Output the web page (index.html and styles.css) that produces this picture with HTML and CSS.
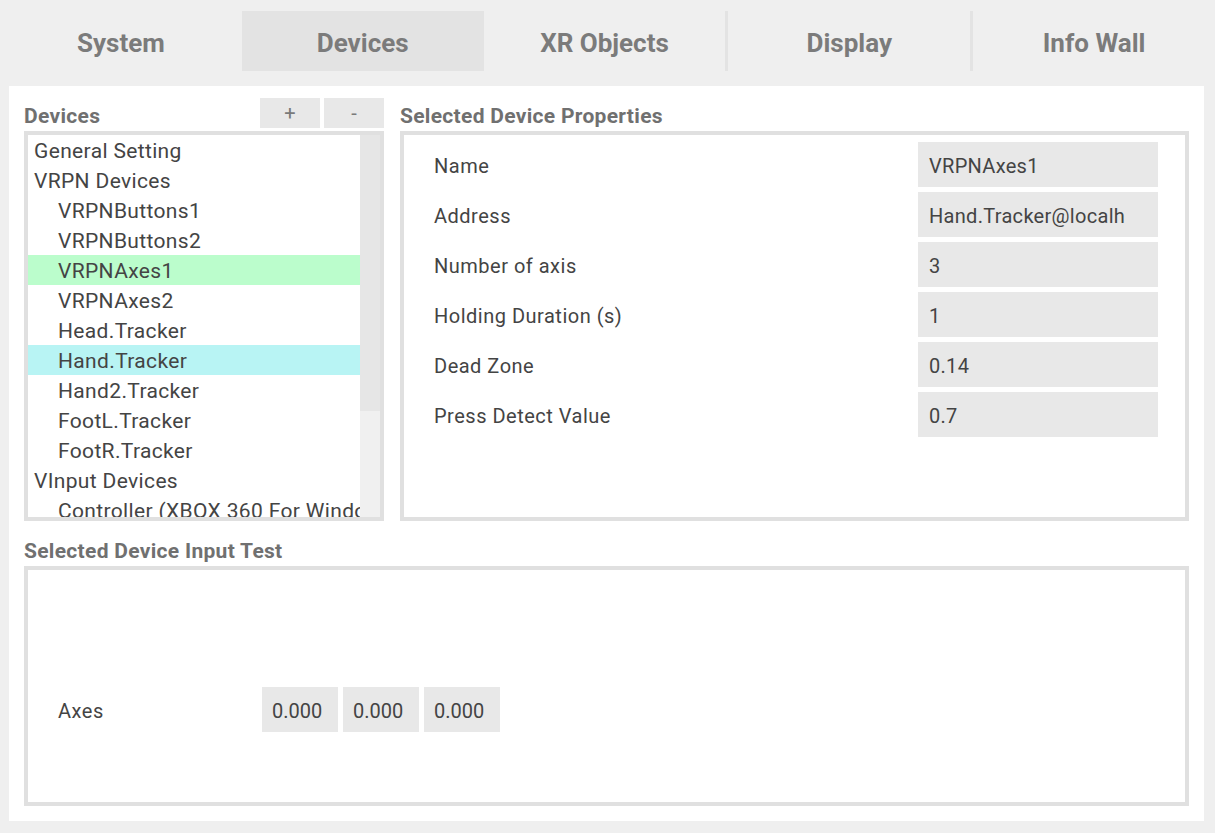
FILE: index.html
```html
<!DOCTYPE html>
<html>
<head>
<meta charset="utf-8">
<link rel="stylesheet" href="styles.css">
</head>
<body>
<nav class="tabs">
  <div class="tab">System</div>
  <div class="tab active">Devices</div>
  <div class="tab sep-right">XR Objects</div>
  <div class="tab sep-right">Display</div>
  <div class="tab">Info Wall</div>
</nav>
<main class="panel">
  <section class="top">
    <div class="col-left">
      <div class="head-row">
        <h2 class="heading">Devices</h2>
        <div class="btns">
          <button class="btn">+</button>
          <button class="btn">-</button>
        </div>
      </div>
      <div class="listbox">
        <ul class="list">
          <li class="item">General Setting</li>
          <li class="item">VRPN Devices</li>
          <li class="item child">VRPNButtons1</li>
          <li class="item child">VRPNButtons2</li>
          <li class="item child sel-green">VRPNAxes1</li>
          <li class="item child">VRPNAxes2</li>
          <li class="item child">Head.Tracker</li>
          <li class="item child sel-cyan">Hand.Tracker</li>
          <li class="item child">Hand2.Tracker</li>
          <li class="item child">FootL.Tracker</li>
          <li class="item child">FootR.Tracker</li>
          <li class="item">VInput Devices</li>
          <li class="item child">Controller (XBOX 360 For Windo</li>
        </ul>
        <div class="scrollbar"><div class="thumb"></div></div>
      </div>
    </div>
    <div class="col-right">
      <div class="head-row">
        <h2 class="heading">Selected Device Properties</h2>
      </div>
      <div class="propbox">
        <div class="prop"><span class="plabel">Name</span><span class="pvalue">VRPNAxes1</span></div>
        <div class="prop"><span class="plabel">Address</span><span class="pvalue">Hand.Tracker@localh</span></div>
        <div class="prop"><span class="plabel">Number of axis</span><span class="pvalue">3</span></div>
        <div class="prop"><span class="plabel">Holding Duration (s)</span><span class="pvalue">1</span></div>
        <div class="prop"><span class="plabel">Dead Zone</span><span class="pvalue">0.14</span></div>
        <div class="prop"><span class="plabel">Press Detect Value</span><span class="pvalue">0.7</span></div>
      </div>
    </div>
  </section>
  <section class="bottom">
    <div class="head-row2">
      <h2 class="heading">Selected Device Input Test</h2>
    </div>
    <div class="testbox">
      <div class="axes-row">
        <span class="axes-label">Axes</span>
        <span class="axval">0.000</span>
        <span class="axval">0.000</span>
        <span class="axval">0.000</span>
      </div>
    </div>
  </section>
</main>
</body>
</html>
```

FILE: styles.css
```css
* { box-sizing: border-box; }
html, body {
  margin: 0;
  padding: 0;
  background: #efefef;
  font-family: Roboto, "Liberation Sans", sans-serif;
  color: #454545;
}
.tabs {
  display: flex;
  padding-top: 11px;
  height: 86px;
}
.tab {
  flex: 1;
  height: 60px;
  display: flex;
  align-items: center;
  justify-content: center;
  font-size: 26px;
  font-weight: 700;
  color: #7b7b7b;
  padding-top: 3px;
}
.tab.active { background: #e3e3e3; }
.tab.sep-right { border-right: 3px solid #e3e3e3; }
.panel {
  background: #fff;
  margin: 0 11px 12px 9px;
  padding: 12px 15px 15px 15px;
}
.top {
  display: flex;
  gap: 16px;
}
.col-left { width: 360px; }
.col-right { flex: 1; }
.head-row {
  height: 30px;
  margin-bottom: 3px;
  display: flex;
  align-items: center;
  justify-content: space-between;
}
.heading {
  margin: 0;
  font-size: 21px;
  font-weight: 700;
  color: #707070;
  line-height: 30px;
  padding-top: 6px;
  letter-spacing: 0.3px;
}
.btns { display: flex; gap: 4px; }
.btn {
  width: 60px;
  height: 30px;
  border: 0;
  padding: 0;
  background: #e8e8e8;
  color: #7a7a7a;
  font-family: Roboto, "Liberation Sans", sans-serif;
  font-size: 20px;
  line-height: 30px;
}
.listbox {
  height: 390px;
  border: 4px solid #e0e0e0;
  display: flex;
  overflow: hidden;
}
.list {
  list-style: none;
  margin: 0;
  padding: 0;
  width: 332px;
  overflow: hidden;
}
.item {
  height: 30px;
  line-height: 32px;
  font-size: 21px;
  letter-spacing: 0.35px;
  padding-left: 6px;
  white-space: nowrap;
  overflow: hidden;
  color: #444;
}
.item.child { padding-left: 30px; }
.sel-green { background: #bbfdcc; }
.sel-cyan { background: #b8f4f4; }
.scrollbar {
  width: 20px;
  background: #f0f0f0;
}
.thumb {
  height: 276px;
  background: #e6e6e6;
}
.propbox {
  height: 390px;
  border: 4px solid #e0e0e0;
  padding: 7px 27px 0 30px;
  display: flex;
  flex-direction: column;
  gap: 5px;
}
.prop {
  display: flex;
  align-items: center;
  height: 45px;
}
.plabel {
  flex: 1;
  font-size: 20px;
  letter-spacing: 0.5px;
  color: #444;
  padding-top: 3px;
}
.pvalue {
  width: 240px;
  height: 45px;
  line-height: 48px;
  background: #e8e8e8;
  padding-left: 11px;
  font-size: 20px;
  letter-spacing: 0.3px;
  color: #444;
  white-space: nowrap;
  overflow: hidden;
}
.head-row2 {
  margin-top: 15px;
  height: 30px;
}
.head-row2 .heading { padding-top: 0; }
.testbox {
  height: 240px;
  border: 4px solid #e0e0e0;
  padding: 117px 0 0 30px;
}
.axes-row {
  display: flex;
  align-items: center;
  gap: 5px;
}
.axes-label {
  width: 199px;
  font-size: 20px;
  letter-spacing: 0.5px;
  color: #444;
  padding-top: 3px;
}
.axval {
  width: 76px;
  height: 45px;
  line-height: 48px;
  background: #e8e8e8;
  padding-left: 10px;
  font-size: 20px;
  color: #444;
}
```
